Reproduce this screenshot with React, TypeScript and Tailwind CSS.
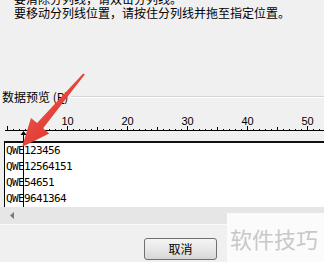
const ticks = Array.from({ length: 54 }, (_, i) => i);

function Ruler() {
  return (
    <svg width="324" height="37" viewBox="0 104 324 37" className="block">
      <rect x="5" y="130" width="319" height="1" fill="#000" />
      {ticks.map(i => {
        const x = 7 + i * 6;
        if (i % 10 === 0) return <rect key={i} x={x} y="126" width="1" height="5" fill="#000" />;
        if (i % 5 === 0) return <rect key={i} x={x} y="127" width="1" height="4" fill="#000" />;
        return <rect key={i} x={x} y="129" width="1" height="1" fill="#000" />;
      })}
      {[10, 20, 30, 40, 50].map(n => (
        <text
          key={n}
          x={7 + n * 6 + 0.5}
          y="125"
          textAnchor="middle"
          fontSize="11"
          fontFamily="'Liberation Sans', Arial, sans-serif"
          fill="#000"
        >
          {n}
        </text>
      ))}
      {/* column break marker */}
      <path d="M23.5 131 L20.5 135 L26.5 135 Z" fill="#000" />
      <rect x="23" y="134" width="1" height="7" fill="#000" />
    </svg>
  );
}

const rows = ['QWE123456', 'QWE12564151', 'QWE54651', 'QWE9641364'];

export default function App() {
  return (
    <div
      className="relative w-[324px] h-[262px] overflow-hidden bg-[#f0f0f0] text-black"
      style={{ fontFamily: "'Noto Sans CJK SC', 'Noto Sans', sans-serif" }}
    >
      <div className="pl-[14px] mt-[-8px] text-[12px] leading-[14px]">
        <div>要清除分列线，请双击分列线。</div>
        <div>要移动分列线位置，请按住分列线并拖至指定位置。</div>
      </div>

      <div className="mt-[70px] flex items-center h-[14px] text-[12px] leading-[14px]">
        <span className="pl-[2px] pr-[3px] whitespace-nowrap">
          数据预览 (<span className="underline">P</span>)
        </span>
        <div className="flex-1 border-t border-b border-t-[#d5d5d5] border-b-white" />
      </div>

      <Ruler />

      <div className="ml-[4px] border-t-2 border-l border-t-[#111] border-l-black bg-white h-[66px] relative">
        <div
          className="pl-[1px] text-[11px] leading-[16px] tracking-[-0.62px]"
          style={{ fontFamily: "'DejaVu Sans Mono', 'Liberation Mono', monospace" }}
        >
          {rows.map(r => (
            <div key={r} className="h-[16px] whitespace-nowrap">{r}</div>
          ))}
        </div>
        <div className="absolute left-[18px] top-0 bottom-0 w-px bg-black" />
      </div>

      <div className="h-[17px] bg-[#e6e6e6] flex items-center pl-[10px]">
        <svg width="5" height="7" viewBox="0 0 5 7">
          <path d="M0 3.5 L4 0 L4 7 Z" fill="#7a7a7a" />
        </svg>
      </div>
      <div className="h-px bg-[#fafafa]" />

      <button className="mt-[13px] ml-[144px] w-[73px] h-[22px] rounded-[3px] border border-[#707070] bg-gradient-to-b from-[#f4f4f4] via-[#e8e8e8] to-[#d6d6d6] text-[12px] leading-[20px] text-black">
        取消
      </button>

      <div className="absolute left-[227px] top-[213px] w-[97px] h-[49px] bg-[#fbfbfb] pl-[3px] pt-[11px] text-[22px] leading-[28px] text-[#c8c8c8] whitespace-nowrap">
        软件技巧
      </div>

      <svg className="absolute left-0 top-0 pointer-events-none" width="324" height="262">
        <defs>
          <linearGradient id="ar" x1="0" y1="0" x2="1" y2="1">
            <stop offset="0" stopColor="#f0625a" />
            <stop offset="1" stopColor="#d8261c" />
          </linearGradient>
        </defs>
        <polygon
          points="83.2,73.4 84.8,74.6 43.1,128.3 49.2,133.5 22,147 31,117.9 37.1,123.1"
          fill="url(#ar)"
        />
      </svg>
    </div>
  );
}
